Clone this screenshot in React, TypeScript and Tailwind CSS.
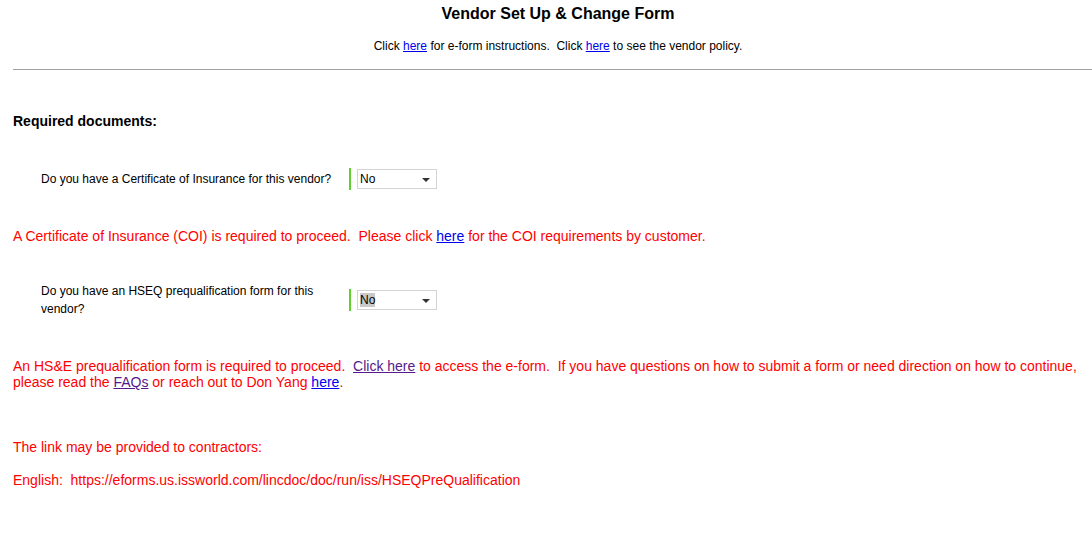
const Caret = () => (
  <svg width="8" height="4" viewBox="0 0 8 4" className="absolute right-[6px] top-[8px]">
    <path d="M0 0h8L4 4z" fill="#333" />
  </svg>
);

const FakeSelect = ({ selected }: { selected?: boolean }) => (
  <div className="flex items-center">
    <div className="w-[2px] h-[22px] bg-[#5fd12f]" />
    <div className="relative ml-[6px] w-[80px] h-[20px] border border-[#d4d4d4] bg-white text-[12px] leading-[18px] pl-[2px] text-black">
      <span className={selected ? "bg-[#c9c9c9]" : ""}>No</span>
      <Caret />
    </div>
  </div>
);

const Link = ({ children, visited }: { children: React.ReactNode; visited?: boolean }) => (
  <a href="#" className={visited ? "underline text-[#551a8b]" : "underline text-[#0000ee]"}>
    {children}
  </a>
);

export default function App() {
  return (
    <div className="w-[1092px] h-[539px] overflow-hidden bg-white text-black font-['Liberation_Sans',Arial,sans-serif]">
      <div className="ml-[13px] w-[1090px]">
        {/* header */}
        <div className="text-center pt-[4px]">
          <h1 className="text-[16px] leading-[20px] font-bold">Vendor Set Up &amp; Change Form</h1>
          <p className="mt-[15px] text-[12px] leading-[14px]">
            Click <Link>here</Link> for e-form instructions.&nbsp; Click <Link>here</Link> to see the vendor policy.
          </p>
        </div>
        <hr className="mt-[16px] border-0 border-t border-[#a0a0a0]" />

        <h2 className="mt-[43px] text-[14px] leading-[16px] font-bold">Required documents:</h2>

        <div className="mt-[39px] flex items-center">
          <div className="pl-[28px] w-[336px] text-[12px] leading-[18px]">Do you have a Certificate of Insurance for this vendor?</div>
          <FakeSelect />
        </div>

        <p className="mt-[38px] text-[14px] leading-[16px] text-[#ff0000]">
          A Certificate of Insurance (COI) is required to proceed.&nbsp; Please click <Link>here</Link> for the COI requirements by customer.
        </p>

        <div className="mt-[38px] flex items-center">
          <div className="pl-[28px] pr-[30px] w-[336px] text-[12px] leading-[18px]">
            Do you have an HSEQ prequalification form for this vendor?
          </div>
          <FakeSelect selected />
        </div>

        <p className="mt-[40px] pr-[2px] text-[14px] leading-[16px] text-[#ff0000] w-[1079px]">
          An HS&amp;E prequalification form is required to proceed.&nbsp; <Link visited>Click here</Link> to access the e-form.&nbsp; If you have questions on how to submit a form or need direction on how to continue, please read the <Link visited>FAQs</Link> or reach out to Don Yang <Link>here</Link>.
        </p>

        <p className="mt-[49px] text-[14px] leading-[16px] text-[#ff0000]">The link may be provided to contractors:</p>
        <p className="mt-[17px] text-[14px] leading-[16px] text-[#ff0000]">
          English:&nbsp; https://eforms.us.issworld.com/lincdoc/doc/run/iss/HSEQPreQualification
        </p>
      </div>
    </div>
  );
}
